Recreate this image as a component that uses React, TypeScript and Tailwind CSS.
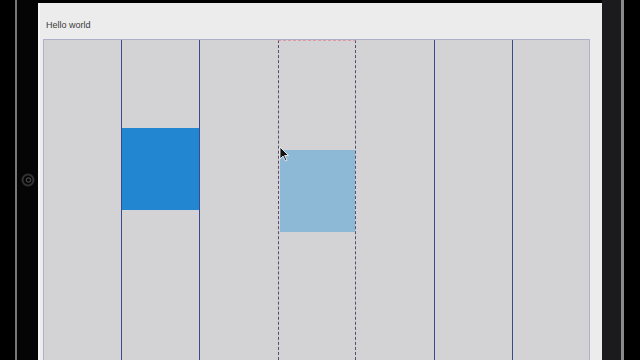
import React from "react";

const COLUMNS = [0, 1, 2, 3, 4, 5, 6];

function HomeButton() {
  return (
    <svg width="14" height="14" viewBox="0 0 14 14" aria-hidden>
      <circle cx="7" cy="7" r="5.5" fill="none" stroke="#333" strokeWidth="2" />
      <circle cx="7.5" cy="7" r="2.2" fill="none" stroke="#444" strokeWidth="1.2" />
    </svg>
  );
}

function Cursor() {
  return (
    <svg width="11" height="16" viewBox="0 0 11 16" aria-hidden>
      <path d="M1 1 L1 13 L4 10 L6.5 15 L8 14.3 L5.6 9.5 L9.5 9.5 Z" fill="#111" stroke="#fff" strokeWidth="0.8" />
    </svg>
  );
}

function Column({ index }: { index: number }) {
  const isDragTarget = index === 3;

  let border = "border-l border-solid border-l-[#3a4a92]";
  if (index === 0) border = "border-l border-solid border-l-[#aeb0cc]";
  if (isDragTarget) border = "border-l border-r border-t border-dashed border-l-[#564a6e] border-r-[#564a6e] border-t-[#e29aa6]";
  if (index === 4) border = "";
  if (index === 6) border = "border-l border-r border-solid border-l-[#3a4a92] border-r-[#aeb0cc]";

  return (
    <div className={`flex flex-col h-full bg-[#d3d3d6] ${border}`}>
      {index === 1 && <div className="mt-[88px] h-[82px] bg-[#2286d0]" />}
      {isDragTarget && <div className="mt-[109px] ml-[1px] h-[82px] bg-[#8db8d6]" />}
    </div>
  );
}

export default function App() {
  return (
    <div className="relative flex w-[640px] h-[360px] overflow-hidden bg-black">
      {/* left bezel */}
      <div className="flex w-[38px] h-full">
        <div className="w-[15px]" />
        <div className="w-[2px] h-full bg-[#777]" />
        <div className="flex flex-1 items-center justify-center pb-[1px] bg-[#050505]">
          <HomeButton />
        </div>
      </div>

      {/* screen */}
      <div className="flex flex-col w-[564px] h-full pt-[3px] bg-black">
        <div className="flex flex-col flex-1 bg-[#ececec] border-l-2 border-[#f7f7f7]">
          <div className="h-[36px] pl-[6px] pt-[16px] text-[9px] leading-[12px] text-[#3a3a3a]" style={{ fontFamily: '"Liberation Sans", Arial, sans-serif' }}>
            Hello world
          </div>
          <div className="flex flex-1 pl-[3px] pr-[12px]">
            <div className="grid grid-cols-[78px_78px_79px_78px_78px_78px_78px] w-[547px] h-full border-t border-[#aeb0cc]">
              {COLUMNS.map((i) => (
                <Column key={i} index={i} />
              ))}
            </div>
          </div>
        </div>
      </div>

      {/* right bezel */}
      <div className="flex h-full flex-1">
        <div className="w-[19px] h-full bg-[#1b1b1d]" />
        <div className="w-[3px] h-full bg-[#8a8a8a]" />
        <div className="flex-1 bg-black" />
      </div>

      {/* pointer */}
      <div className="absolute left-[279px] top-[146px]">
        <Cursor />
      </div>
    </div>
  );
}
